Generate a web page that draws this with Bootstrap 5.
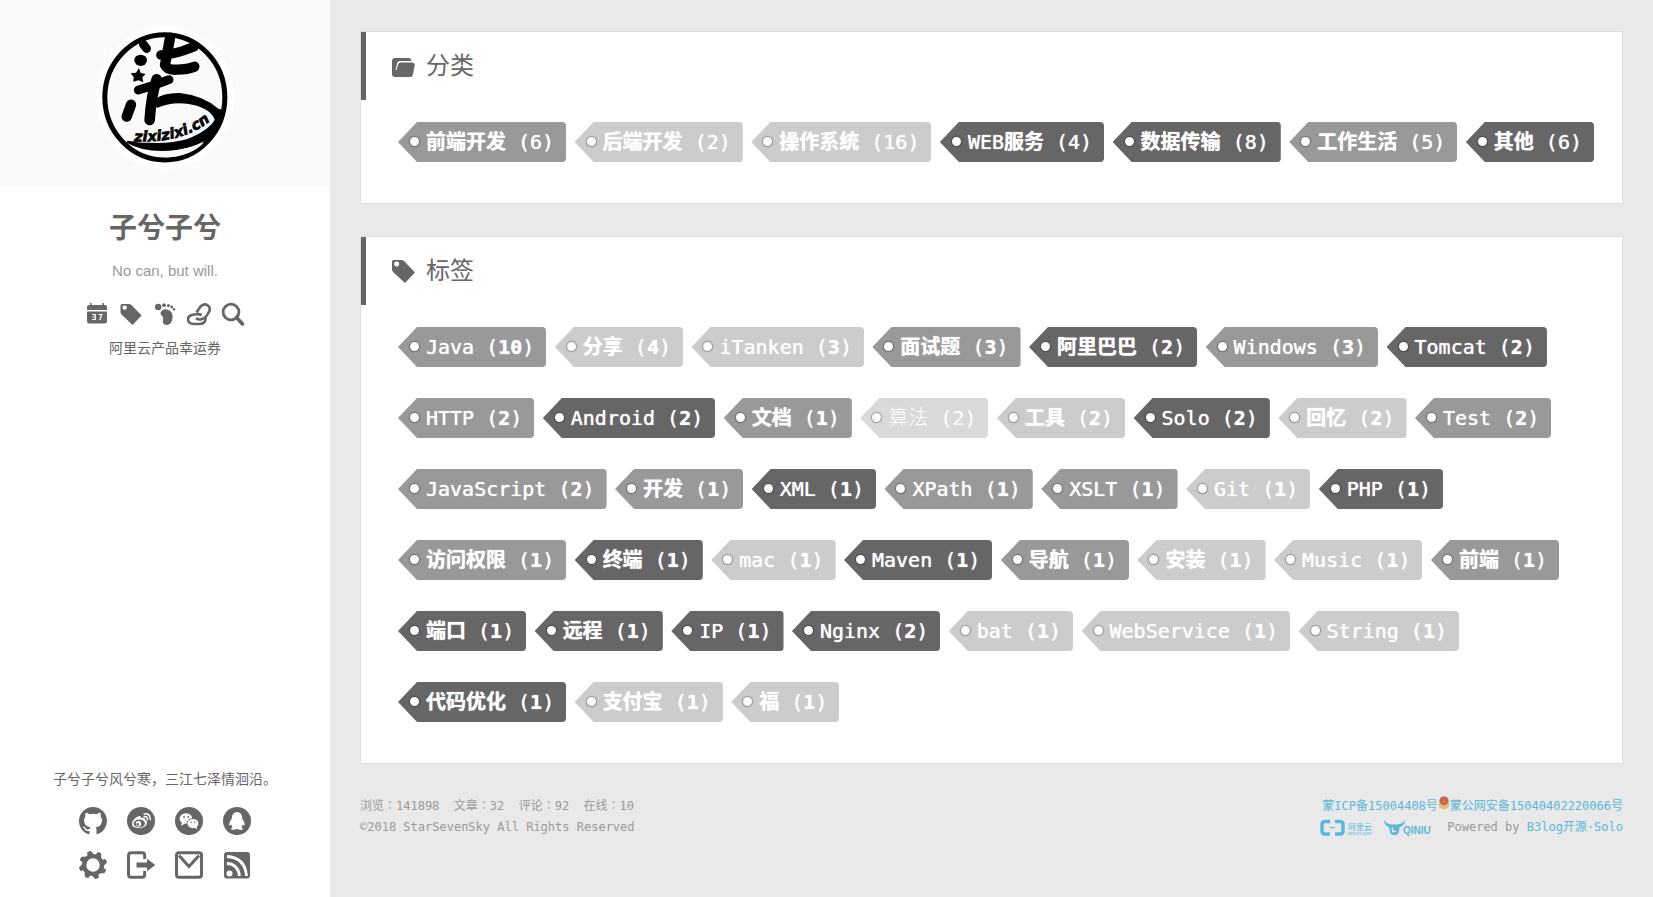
<!DOCTYPE html>
<html lang="zh-CN">
<head>
<meta charset="utf-8">
<meta name="viewport" content="width=device-width, initial-scale=1">
<title>子兮子兮 - 标签墙</title>
<link href="https://cdn.jsdelivr.net/npm/bootstrap@5.3.0/dist/css/bootstrap.min.css" rel="stylesheet">
<style>
body{background:#e9e9e9;color:#666;font-family:"DejaVu Sans Mono","Noto Sans CJK SC",monospace;font-size:14px}
a{color:#666;text-decoration:none}
svg{display:block;fill:currentColor}
.side{width:330px;background:#fff;font-family:"Liberation Sans","Noto Sans CJK SC",sans-serif;line-height:20px}
.side-head{background:#fafafa;padding:25px 0 17px}
.blog-name{font-size:28px;line-height:32px;font-weight:700;margin:26px 0 16px}
.tagline{color:#999;font-size:15px}
.side-nav{gap:10px;margin:21px 0 12px}
.social{gap:16px 20px;padding:18px 0 18px}
.content{padding:31px 30px}
.panel{background:#fff;border:1px solid #dedede;margin-bottom:32px}
.panel-head{height:68px;border-left:5px solid #666;padding-left:26px;gap:11px}
.panel-head h2{font-size:24px;line-height:36px}
.tags{padding:22px 24px 10px 37px;line-height:40px}
.tag{display:inline-block;vertical-align:top;height:40px;margin-bottom:31px;padding:0 12px;border-radius:4px;font-size:20px;line-height:40px;white-space:nowrap;color:#fff;text-shadow:0 0 1px #fff;background:#999;clip-path:polygon(0 50%,19px 0,100% 0,100% 100%,19px 100%)}
.tag::before{content:"";display:inline-block;width:9px;height:9px;margin-right:7px;border-radius:50%;background:#fff;box-shadow:0 0 1px 1px rgba(0,0,0,.3);vertical-align:3px}
.tag.deep{background:#666}
.tag.pale{background:#ccc}
.tag.faint{background:#d9d9d9;font-weight:300;text-shadow:none}
.tag:hover{color:#fff;opacity:.85}
.foot{font-size:12px;line-height:21px;color:#999}
.foot a{color:#5bb8da}
.foot .sponsors{gap:12px}
</style>
</head>
<body>
<div class="d-flex min-vh-100">
<aside class="side d-flex flex-column flex-shrink-0 text-center vh-100 sticky-top">
  <a class="side-head d-flex justify-content-center" href="#" aria-label="子兮子兮">
    <svg width="140" height="145" viewBox="45 45 420 435">
      <ellipse cx="255" cy="262" rx="207" ry="215" fill="#fff"/>
      <ellipse cx="254.500" cy="262" rx="180" ry="188" fill="#fafafa" stroke="#000" stroke-width="15"/>
      <g fill="none" stroke="#000" stroke-linecap="round" stroke-linejoin="round">
        <path d="M190 103L200 116" stroke-width="26"/>
        <path d="M270 84L255 165Q262 181 290 179Q325 178 343 170" stroke-width="31"/>
        <path d="M243 135Q280 132 307 123L342 110" stroke-width="29"/>
        <path d="M175 240Q220 228 267 209" stroke-width="27"/>
        <path d="M230 208Q213 260 209 330" stroke-width="32"/>
        <path d="M153 284L140 320" stroke-width="31"/>
      </g>
      <ellipse cx="182" cy="151" rx="19" ry="17" fill="#000"/>
      <path d="M177 174L182 189L197 192L187 202L190 217L175 211L160 215L161 201L152 190L168 188Z" fill="#000"/>
      <path d="M225 268Q250 248 300 249Q372 257 416 297L434 300Q430 340 402 375Q352 412 290 420Q200 432 140 398L142 392Q250 408 320 388Q385 362 404 330Q395 300 345 286Q285 270 230 294Z" fill="#000"/>
      <path d="M196 427Q290 430 372 398Q330 440 258 442Q220 441 196 427Z" fill="#fafafa"/>
      <path id="arc" d="M162 394Q320 402 405 320" fill="none"/>
      <path d="M170 382Q310 386 384 324" fill="none" stroke="#fafafa" stroke-width="30"/>
      <text font-family="DejaVu Sans,sans-serif" font-weight="700" font-style="italic" font-size="44" fill="#000" stroke="#000" stroke-width="2"><textPath href="#arc">zixizixi.cn</textPath></text>
    </svg>
  </a>
  <h1 class="blog-name">子兮子兮</h1>
  <div class="tagline">No can, but will.</div>
  <nav class="side-nav d-flex justify-content-center">
    <a href="#" aria-label="存档"><svg width="24" height="24" viewBox="0 0 24 24"><path d="M2 5q0-2 2-2h1V1h1.500v2h11V1H19v2h1q2 0 2 2v3H2zM2 9.500h20V19q0 2.500-2.500 2.500h-15Q2 21.500 2 19z"/><path d="M7 12.500h3.300v5H7M7.500 15h2.800M13.500 12.500h3.300l-2 5.500" fill="none" stroke="#fff" stroke-width="1.200"/></svg></a>
    <a href="#" aria-label="标签"><svg width="24" height="24" viewBox="0 0 24 24"><path fill-rule="evenodd" d="M1.500 3.500Q1.500 2 3 2h7.500l2 1L22.500 13.500 13.500 23 2.500 12.500l-1-2zM5.600 3.400a2.200 2.200 0 1 0 .1 0z"/></svg></a>
    <a href="#" aria-label="足迹"><svg width="24" height="24" viewBox="0 0 24 24"><circle cx="5.200" cy="5" r="3.200"/><circle cx="11" cy="3.200" r="1.900"/><circle cx="15.400" cy="3.400" r="1.500"/><circle cx="18.800" cy="5" r="1.400"/><circle cx="21" cy="7.300" r="1.200"/><path d="M7.500 11Q9 6.500 14 7.500q6 1.500 5.500 8Q19 23 13.500 23q-4.500-.5-3.500-5 .8-3-1.200-4.500Q7.300 12.500 7.500 11z"/></svg></a>
    <a href="#" aria-label="链接"><svg width="24" height="24" viewBox="0 0 24 24"><g fill="none" stroke="currentColor" stroke-width="2.600"><path d="M9.500 10.500l4-6Q17 .8 21 3.500q3.500 3 .3 7.500-2.500 5-6 6-4.500 1.200-6.300-.8"/><path d="M14.500 13.200Q13 11.800 9 12.300q-8.200.5-8 5.200.2 4.500 6.500 4.500h5q6.500-.5 6-6"/></g></svg></a>
    <a href="#" aria-label="搜索"><svg width="24" height="24" viewBox="0 0 24 24"><circle cx="10" cy="10" r="7.900" fill="none" stroke="currentColor" stroke-width="2.800"/><path d="M15.500 15.500l6 6.500" stroke="currentColor" stroke-width="3.600" stroke-linecap="round"/></svg></a>
  </nav>
  <a href="#">阿里云产品幸运券</a>
  <div class="mt-auto">
    <div>子兮子兮风兮寒，三江七泽情洄沿。</div>
    <div class="social d-flex flex-wrap justify-content-center px-5 mx-3">
      <a href="#" aria-label="GitHub"><svg width="28" height="28" viewBox="0 0 16 16"><path d="M8 0C3.580 0 0 3.580 0 8c0 3.540 2.290 6.530 5.470 7.590.4.070.55-.17.55-.38 0-.19-.01-.82-.01-1.490-2.010.37-2.530-.49-2.690-.94-.09-.23-.48-.94-.82-1.130-.28-.15-.68-.52-.01-.53.630-.01 1.080.58 1.230.82.720 1.210 1.870.87 2.330.66.070-.52.280-.87.510-1.070-1.780-.2-3.640-.89-3.640-3.950 0-.87.310-1.590.82-2.150-.08-.2-.36-1.020.08-2.120 0 0 .67-.21 2.200.82a7.600 7.600 0 0 1 4 0c1.530-1.040 2.200-.82 2.200-.82.440 1.100.16 1.920.08 2.120.51.560.82 1.270.82 2.150 0 3.070-1.870 3.750-3.650 3.950.29.250.54.730.54 1.480 0 1.070-.01 1.930-.01 2.200 0 .21.150.46.550.38A8.010 8.010 0 0 0 16 8c0-4.420-3.580-8-8-8z"/></svg></a>
      <a href="#" aria-label="微博"><svg width="28" height="28" viewBox="0 0 28 28"><circle cx="14" cy="14" r="14"/><path fill="#fff" d="M5 17q0-4 5-7 3.500-2 4 0v1q4-1.500 4 1.500 2 .7 2 3-.5 5-7.500 5.500Q5 21 5 17z"/><ellipse cx="12.300" cy="16.400" rx="5.700" ry="3.900"/><circle cx="11.500" cy="16.700" r="2.700" fill="#fff"/><circle cx="10.800" cy="17.300" r="1.300"/><path d="M17 6.700q6.500-.7 6.300 6M17.200 9.500q3.600-.3 3.300 3" fill="none" stroke="#fff" stroke-width="1.500" stroke-linecap="round"/></svg></a>
      <a href="#" aria-label="微信"><svg width="28" height="28" viewBox="0 0 28 28"><circle cx="14" cy="14" r="14"/><g fill="#fff"><ellipse cx="11" cy="11.500" rx="6.300" ry="5.300"/><path d="M7 15l-1 4 4-2.500z"/></g><ellipse cx="17.800" cy="16.500" rx="6.300" ry="5.400"/><ellipse cx="17.900" cy="16.600" rx="5.500" ry="4.600" fill="#fff"/><path d="M19 20l3 2.500-.5-3.500z" fill="#fff"/><circle cx="9" cy="10" r=".9"/><circle cx="13.300" cy="10" r=".9"/><circle cx="16" cy="15.300" r=".8"/><circle cx="19.700" cy="15.300" r=".8"/></svg></a>
      <a href="#" aria-label="QQ"><svg width="28" height="28" viewBox="0 0 28 28"><circle cx="14" cy="14" r="14"/><path fill="#fff" d="M14 5q5 0 5.200 6.500Q22 15 21.700 18q-.7 1.500-2-.5l-1.200 2.700q2 1 1.200 2.300-3.500 1-5.700-.7-2.200 1.700-5.700.7-.8-1.300 1.200-2.300L8.300 17.500q-1.300 2-2 .5Q6 15 8.800 11.500 9 5 14 5z"/></svg></a>
      <a href="#" aria-label="设置"><svg width="28" height="28" viewBox="0 0 28 28"><circle cx="14" cy="14" r="8.900" fill="none" stroke="currentColor" stroke-width="4.400"/><path id="tooth" d="M9 5.500L8 1.500Q9.500.3 11.800.1L15 3.500z"/><use href="#tooth" transform="rotate(45 14 14)"/><use href="#tooth" transform="rotate(90 14 14)"/><use href="#tooth" transform="rotate(135 14 14)"/><use href="#tooth" transform="rotate(180 14 14)"/><use href="#tooth" transform="rotate(225 14 14)"/><use href="#tooth" transform="rotate(270 14 14)"/><use href="#tooth" transform="rotate(315 14 14)"/></svg></a>
      <a href="#" aria-label="登录"><svg width="28" height="28" viewBox="0 0 28 28"><path d="M17.700 8V4.500q0-2.700-2.700-2.700H4.200q-2.700 0-2.700 2.700v19q0 2.700 2.700 2.700H15q2.700 0 2.700-2.700V20" fill="none" stroke="currentColor" stroke-width="3"/><path d="M9.500 11.500H20V7.700l8.500 6.300-8.500 6.300v-3.800H9.500z"/></svg></a>
      <a href="#" aria-label="邮件"><svg width="28" height="28" viewBox="0 0 28 28"><rect x="1.500" y="1.700" width="25" height="24.600" rx="2.500" fill="none" stroke="currentColor" stroke-width="3"/><path d="M4 4.500l10 11 10-11" fill="none" stroke="currentColor" stroke-width="3"/></svg></a>
      <a href="#" aria-label="RSS"><svg width="28" height="28" viewBox="0 0 28 28"><rect x="1" y="1" width="26" height="26.500" rx="3"/><circle cx="6.500" cy="22.500" r="3" fill="#fff"/><path d="M4 5.500q18 1 19.500 19.500M4 12.500q11 .5 12.500 12.500" fill="none" stroke="#fff" stroke-width="2.800"/></svg></a>
    </div>
  </div>
</aside>

<main class="content flex-grow-1">
  <section class="panel">
    <div class="panel-head d-flex align-items-center">
      <svg width="23" height="23" viewBox="0 0 23 23"><path d="M0 6q0-3 3-3h13q3 0 3.500 3H8Q5.500 6 5 9L3.500 15h1L6.200 9.500Q6.800 7.500 9 7.500h11q3 0 2.700 3L21 19.500Q20.500 22 18 22H3q-3 0-3-3z"/></svg>
      <h2 class="m-0 fw-normal">分类</h2>
    </div>
    <div class="tags">
      <a class="tag" href="#"><b>前端开发</b> (6)</a>
      <a class="tag pale" href="#"><b>后端开发</b> (2)</a>
      <a class="tag pale" href="#"><b>操作系统</b> (16)</a>
      <a class="tag deep" href="#">WEB<b>服务</b> (4)</a>
      <a class="tag deep" href="#"><b>数据传输</b> (8)</a>
      <a class="tag" href="#"><b>工作生活</b> (5)</a>
      <a class="tag deep" href="#"><b>其他</b> (6)</a>
    </div>
  </section>

  <section class="panel mb-0">
    <div class="panel-head d-flex align-items-center">
      <svg width="23" height="23" viewBox="0 0 23 23"><path fill-rule="evenodd" d="M0 1.500Q0 0 1.500 0H10l2 1 11 11.500L13 23 1 12 0 10zM4.600 1.400a2.600 2.600 0 1 0 .1 0z"/></svg>
      <h2 class="m-0 fw-normal">标签</h2>
    </div>
    <div class="tags">
      <a class="tag" href="#">Java (<b>10</b>)</a>
      <a class="tag pale" href="#"><b>分享</b> (<b>4</b>)</a>
      <a class="tag pale" href="#">iTanken (<b>3</b>)</a>
      <a class="tag" href="#"><b>面试题</b> (<b>3</b>)</a>
      <a class="tag deep" href="#"><b>阿里巴巴</b> (<b>2</b>)</a>
      <a class="tag" href="#">Windows (<b>3</b>)</a>
      <a class="tag deep" href="#">Tomcat (<b>2</b>)</a>
      <a class="tag" href="#">HTTP (<b>2</b>)</a>
      <a class="tag deep" href="#">Android (<b>2</b>)</a>
      <a class="tag" href="#"><b>文档</b> (<b>1</b>)</a>
      <a class="tag faint" href="#">算法 (2)</a>
      <a class="tag pale" href="#"><b>工具</b> (<b>2</b>)</a>
      <a class="tag deep" href="#">Solo (<b>2</b>)</a>
      <a class="tag pale" href="#"><b>回忆</b> (<b>2</b>)</a>
      <a class="tag" href="#">Test (<b>2</b>)</a>
      <a class="tag" href="#">JavaScript (<b>2</b>)</a>
      <a class="tag" href="#"><b>开发</b> (<b>1</b>)</a>
      <a class="tag deep" href="#">XML (<b>1</b>)</a>
      <a class="tag" href="#">XPath (<b>1</b>)</a>
      <a class="tag" href="#">XSLT (<b>1</b>)</a>
      <a class="tag pale" href="#">Git (<b>1</b>)</a>
      <a class="tag deep" href="#">PHP (<b>1</b>)</a>
      <a class="tag" href="#"><b>访问权限</b> (<b>1</b>)</a>
      <a class="tag deep" href="#"><b>终端</b> (<b>1</b>)</a>
      <a class="tag pale" href="#">mac (<b>1</b>)</a>
      <a class="tag deep" href="#">Maven (<b>1</b>)</a>
      <a class="tag" href="#"><b>导航</b> (<b>1</b>)</a>
      <a class="tag pale" href="#"><b>安装</b> (<b>1</b>)</a>
      <a class="tag pale" href="#">Music (<b>1</b>)</a>
      <a class="tag" href="#"><b>前端</b> (<b>1</b>)</a>
      <a class="tag deep" href="#"><b>端口</b> (<b>1</b>)</a>
      <a class="tag deep" href="#"><b>远程</b> (<b>1</b>)</a>
      <a class="tag deep" href="#">IP (<b>1</b>)</a>
      <a class="tag deep" href="#">Nginx (<b>2</b>)</a>
      <a class="tag pale" href="#">bat (<b>1</b>)</a>
      <a class="tag pale" href="#">WebService (<b>1</b>)</a>
      <a class="tag pale" href="#">String (<b>1</b>)</a>
      <a class="tag deep" href="#"><b>代码优化</b> (<b>1</b>)</a>
      <a class="tag pale" href="#"><b>支付宝</b> (<b>1</b>)</a>
      <a class="tag pale" href="#"><b>福</b> (<b>1</b>)</a>
    </div>
  </section>

  <footer class="foot d-flex justify-content-between pt-4 mt-2">
    <div>
      <div lang="zh-TW">浏览：141898 &nbsp;文章：32 &nbsp;评论：92 &nbsp;在线：10</div>
      <div>©2018 StarSevenSky All Rights Reserved</div>
    </div>
    <div>
      <div class="d-flex justify-content-end">
        <a href="#">蒙ICP备15004408号</a>
        <svg width="12" height="14" viewBox="0 0 12 14"><ellipse cx="6" cy="8.500" rx="5.300" ry="5" fill="#e6be7c"/><ellipse cx="6" cy="4.800" rx="4.700" ry="4.600" fill="#a98a78"/><ellipse cx="6" cy="4.800" rx="3.400" ry="3.400" fill="#cf4a3f"/><path d="M4 6h4M6 2.500v3" stroke="#e9b04f"/></svg>
        <a href="#">蒙公网安备15040402220066号</a>
      </div>
      <div class="sponsors d-flex justify-content-end align-items-center">
        <a href="#" aria-label="阿里云"><svg width="52" height="18" viewBox="0 0 52 18"><path d="M10 2.500H5Q2 2.500 2 5.500v6.500q0 3 3 3h5M15 2.500h5q3 0 3 3v6.500q0 3-3 3h-5" fill="none" stroke="currentColor" stroke-width="3.400"/><path d="M10 8.200h5v1h-5z"/><text x="28" y="11" font-size="8" font-family="Noto Sans CJK SC,sans-serif">阿里云</text><text x="28" y="16" font-size="5" font-family="Liberation Sans,sans-serif">aliyun.com</text></svg></a>
        <a href="#" aria-label="QINIU"><svg width="47" height="18" viewBox="0 0 47 18"><path d="M0 1Q3 6 10.500 5.500 18 6 21 1q-.5 6-5.500 7.300L14.800 13q-.5 3-3.300 3H9q-2.500-.3-3-3L5 8.300Q.5 6.500 0 1z"/><path d="M8 8.500l1 4h3" fill="none" stroke="#e9e9e9" stroke-width="1.400"/><text x="19" y="15" font-size="10" font-weight="700" font-family="Liberation Sans,sans-serif">QINIU</text></svg></a>
        <span class="ms-1">Powered by <a href="#">B3log开源·Solo</a></span>
      </div>
    </div>
  </footer>
</main>
</div>
<script src="https://cdn.jsdelivr.net/npm/bootstrap@5.3.0/dist/js/bootstrap.bundle.min.js"></script>
</body>
</html>
